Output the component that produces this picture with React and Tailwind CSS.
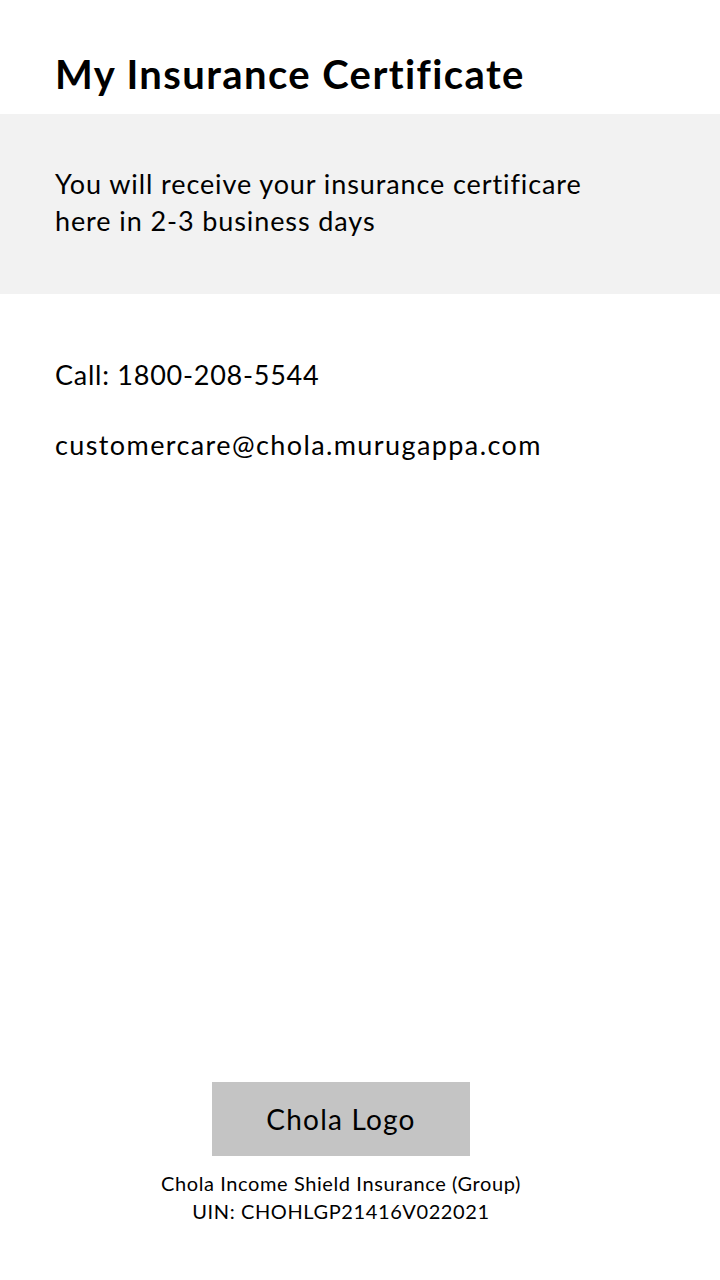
import React from 'react';

export default function App() {
  return (
    <div
      className="min-h-[1280px] flex flex-col bg-white text-black"
      style={{ fontFamily: 'Lato, "Noto Sans", sans-serif' }}
    >
      <h1 className="h-[114px] px-[55px] pt-[49px] text-[40px] leading-[50px] font-bold tracking-[1.4px]">
        My Insurance Certificate
      </h1>

      <div className="h-[180px] bg-[#f2f2f2] px-[55px] pt-[51px]">
        <p className="text-[27px] leading-[37px] tracking-[0.9px] w-[580px]">
          You will receive your insurance certificare here in 2-3 business days
        </p>
      </div>

      <div className="px-[55px] pt-[62px] flex flex-col gap-[33px] text-[27px] leading-[37px]">
        <p className="tracking-[0.75px]">Call: 1800-208-5544</p>
        <p className="tracking-[1.4px]">customercare@chola.murugappa.com</p>
      </div>

      <div className="mt-auto flex flex-col items-center pr-[38px] pb-[55px]">
        <div className="w-[258px] h-[74px] bg-[#c4c4c4] flex items-center justify-center text-[28px] tracking-[1.2px]">
          Chola Logo
        </div>
        <div className="mt-[13px] text-center text-[20px] leading-[28px] tracking-[0.6px]">
          <p>Chola Income Shield Insurance (Group)</p>
          <p>UIN: CHOHLGP21416V022021</p>
        </div>
      </div>
    </div>
  );
}
